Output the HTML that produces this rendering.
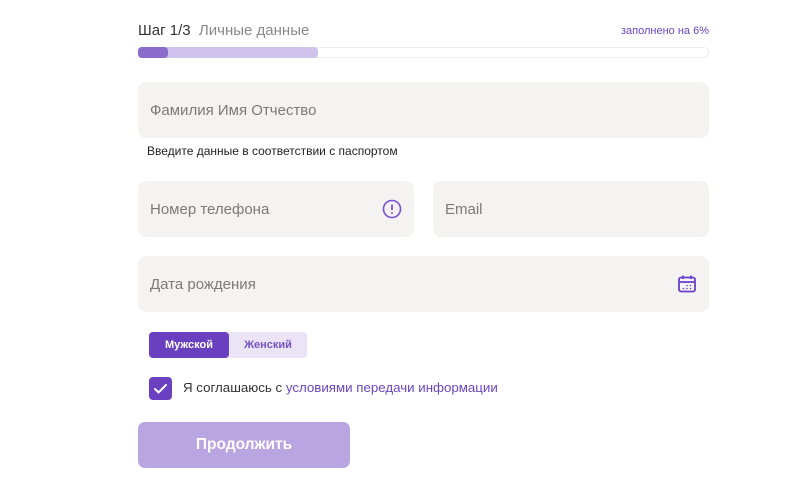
<!DOCTYPE html>
<html><head><meta charset="utf-8"><style>
*{margin:0;padding:0;box-sizing:border-box}
body{width:800px;height:494px;background:#fff;font-family:"Liberation Sans",sans-serif;position:relative;overflow:hidden}
.a{position:absolute}
.f{position:absolute;background:#f4f3f2;border-radius:8px;color:#7b7a7a;font-size:15px;padding-left:12px;display:flex;align-items:center}
</style></head><body>
<div class="a" style="left:138px;top:22px;font-size:15px;color:#333">Шаг 1/3 <span style="color:#888">&nbsp;Личные данные</span></div>
<div class="a" style="right:91px;top:25px;font-size:11px;color:#6a45c0">заполнено на 6%</div>
<div class="a" style="left:138px;top:47px;width:571px;height:11px;border:1px solid #eeeef2;border-radius:6px"></div>
<div class="a" style="left:138px;top:47px;width:180px;height:11px;background:#cfc2ec;border-radius:4px"></div>
<div class="a" style="left:138px;top:47px;width:30px;height:11px;background:#8b6bcc;border-radius:4px"></div>
<div class="f" style="left:138px;top:82px;width:571px;height:56px">Фамилия Имя Отчество</div>
<div class="a" style="left:147px;top:144px;font-size:12px;color:#222">Введите данные в соответствии с паспортом</div>
<div class="f" style="left:138px;top:181px;width:276px;height:56px">Номер телефона</div>
<svg class="a" style="left:382px;top:199px" width="20" height="20" viewBox="0 0 20 20"><circle cx="10" cy="10" r="8.5" fill="none" stroke="#7a4fd6" stroke-width="1.6"/><line x1="10" y1="5.5" x2="10" y2="11" stroke="#7a4fd6" stroke-width="1.8"/><circle cx="10" cy="14" r="1" fill="#7a4fd6"/></svg>
<div class="f" style="left:433px;top:181px;width:276px;height:56px">Email</div>
<div class="f" style="left:138px;top:256px;width:571px;height:56px">Дата рождения</div>
<svg class="a" style="left:677px;top:274px" width="20" height="20" viewBox="0 0 20 20"><rect x="2" y="3.5" width="16" height="14" rx="2" fill="none" stroke="#6a3fc8" stroke-width="1.8"/><line x1="2" y1="8" x2="18" y2="8" stroke="#6a3fc8" stroke-width="1.8"/><line x1="6" y1="1.5" x2="6" y2="5" stroke="#6a3fc8" stroke-width="1.8"/><line x1="14" y1="1.5" x2="14" y2="5" stroke="#6a3fc8" stroke-width="1.8"/><circle cx="10" cy="11.5" r=".8" fill="#6a3fc8"/><circle cx="13.5" cy="11.5" r=".8" fill="#6a3fc8"/><circle cx="6.5" cy="14.5" r=".8" fill="#6a3fc8"/><circle cx="10" cy="14.5" r=".8" fill="#6a3fc8"/><circle cx="13.5" cy="14.5" r=".8" fill="#6a3fc8"/></svg>
<div class="a" style="left:149px;top:332px;width:158px;height:26px;background:#ebe4f7;border-radius:4px"></div>
<div class="a" style="left:149px;top:332px;width:80px;height:26px;background:#6a3fc0;border-radius:4px;color:#fff;font-size:11px;font-weight:bold;text-align:center;line-height:26px">Мужской</div>
<div class="a" style="left:229px;top:332px;width:78px;height:26px;color:#7452c4;font-size:11px;font-weight:bold;text-align:center;line-height:26px">Женский</div>
<div class="a" style="left:149px;top:377px;width:23px;height:23px;background:#6a3fc0;border-radius:4px"></div>
<svg class="a" style="left:149px;top:377px" width="23" height="23" viewBox="0 0 23 23"><path d="M6 12l3.5 3.5L17 8" fill="none" stroke="#fff" stroke-width="2" stroke-linecap="round" stroke-linejoin="round"/></svg>
<div class="a" style="left:183px;top:380px;font-size:13.3px;color:#333">Я соглашаюсь с <span style="color:#6a45c0">условиями передачи информации</span></div>
<div class="a" style="left:138px;top:422px;width:212px;height:46px;background:#b9a5e2;border-radius:7px;color:#fff;font-size:15.5px;font-weight:bold;text-align:center;line-height:46px">Продолжить</div>
</body></html>
